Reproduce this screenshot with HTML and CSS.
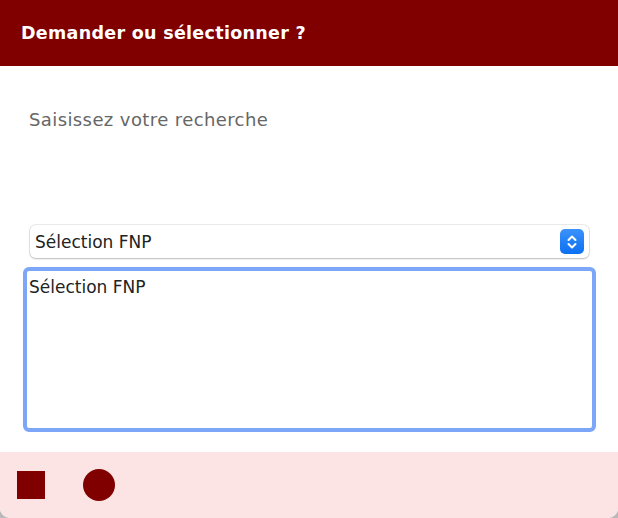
FILE: index.html
```html
<!DOCTYPE html>
<html lang="fr">
<head>
    <meta charset="UTF-8">
    <meta name="viewport" content="width=device-width, initial-scale=1.0">
    <title>Demander ou sélectionner ?</title>
    <link rel="stylesheet" href="styles.css">
</head>
<body>
    <div class="dialog">
        <header class="dialog-header">
            <h1>Demander ou sélectionner ?</h1>
        </header>
        <main class="dialog-body">
            <p class="prompt">Saisissez votre recherche</p>
            <div class="select-box">
                <span class="select-value">Sélection FNP</span>
                <span class="stepper">
                    <svg width="12" height="16" viewBox="0 0 12 16">
                        <path d="M2.5 6 L6 2.5 L9.5 6 M2.5 10 L6 13.5 L9.5 10" fill="none" stroke="#fff" stroke-width="2" stroke-linecap="round" stroke-linejoin="round"/>
                    </svg>
                </span>
            </div>
            <div class="text-area">Sélection FNP</div>
        </main>
        <footer class="dialog-footer">
            <span class="btn-stop"></span>
            <span class="btn-record"></span>
        </footer>
    </div>
</body>
</html>
```

FILE: styles.css
```css
body {
    margin: 0;
    padding: 0;
    background: #b9b9b9;
    font-family: 'DejaVu Sans', 'Noto Sans', sans-serif;
}

.dialog {
    width: 618px;
    height: 518px;
    display: flex;
    flex-direction: column;
    background: #fff;
    border-radius: 0 0 10px 10px;
    overflow: hidden;
}

.dialog-header {
    height: 66px;
    background: #800000;
    display: flex;
    align-items: center;
    padding: 0 21px;
    flex-shrink: 0;
}

.dialog-header h1 {
    margin: 0;
    color: #fff;
    font-size: 17.5px;
    font-weight: bold;
    letter-spacing: 0.3px;
}

.dialog-body {
    flex: 1;
    display: flex;
    flex-direction: column;
}

.prompt {
    margin: 42px 0 0 29px;
    color: #666;
    font-size: 18px;
    letter-spacing: 0.4px;
    line-height: 24px;
}

.select-box {
    margin: 93px 29px 0 30px;
    height: 33px;
    box-sizing: border-box;
    display: flex;
    align-items: center;
    justify-content: space-between;
    padding: 0 5px 0 5px;
    border-radius: 6px;
    background: #fff;
    box-shadow: 0 0 0 1px rgba(0, 0, 0, 0.08), 0 1px 2px rgba(0, 0, 0, 0.2);
}

.select-value {
    color: #222;
    font-size: 17px;
}

.stepper {
    width: 24px;
    height: 25px;
    border-radius: 5px;
    background: linear-gradient(#3b92fb, #0b70f2);
    display: flex;
    align-items: center;
    justify-content: center;
}

.text-area {
    margin: 9px 22px 0 23px;
    height: 165px;
    box-sizing: border-box;
    border: 4px solid #7ca7f8;
    border-radius: 6px;
    padding: 6px 2px;
    color: #222;
    font-size: 17px;
    line-height: 20px;
}

.dialog-footer {
    height: 66px;
    margin-top: auto;
    background: #fde4e4;
    display: flex;
    align-items: center;
    gap: 38px;
    padding: 0 17px;
    flex-shrink: 0;
}

.btn-stop {
    width: 28px;
    height: 28px;
    background: #800000;
}

.btn-record {
    width: 32px;
    height: 32px;
    border-radius: 50%;
    background: #800000;
}
```
